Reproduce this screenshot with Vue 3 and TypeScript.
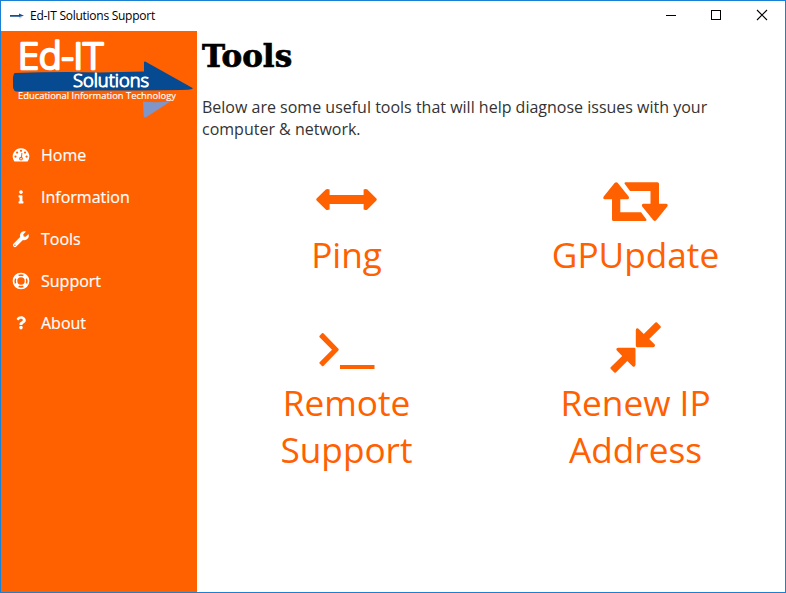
<script setup lang="ts">
interface MenuItem {
  label: string
  icon: 'home' | 'info' | 'wrench' | 'ring' | 'question'
}

interface Tool {
  lines: string[]
  viewBox: string
  path: string
}

const menu: MenuItem[] = [
  { label: 'Home', icon: 'home' },
  { label: 'Information', icon: 'info' },
  { label: 'Tools', icon: 'wrench' },
  { label: 'Support', icon: 'ring' },
  { label: 'About', icon: 'question' },
]

const tools: Tool[] = [
  {
    lines: ['Ping'],
    viewBox: '314 172 65 56',
    path: 'M316.6 198.6L325.8 189.5Q327.2 188.4 329.6 189.4V195H363.6V189.4Q366 188.4 367.4 189.5L376.4 198.6Q377.2 199.5 376.4 200.4L367.4 209.5Q366 210.6 363.6 209.6V204H329.6V209.6Q327.2 210.6 325.8 209.5L316.6 200.4Q315.8 199.5 316.6 198.6Z',
  },
  {
    lines: ['GPUpdate'],
    viewBox: '603 172 65 56',
    path: 'M614.8 182.8Q616.2 181.5 617.6 182.8L628.6 196.6Q629.8 198.8 627.6 199.3H620.3V212.2H641L646.3 219.3Q646.9 220.9 645.4 221H613.6Q612 221 612 219.4V199.3H604.8Q602.5 198.8 603.7 196.6ZM625.6 182.2H657.4Q659 182.2 659 183.8V203.8H666.2Q668.5 204.4 667.3 206.4L656.2 220.3Q654.8 221.6 653.4 220.3L642.2 206.4Q641.1 204.4 643.3 203.8H650.5V190.9H630L624.8 184Q624 182.5 625.6 182.2Z',
  },
  {
    lines: ['Remote', 'Support'],
    viewBox: '314 320 65 56',
    path: 'M319.6 335.8L322 333.2Q322.7 332.7 323.4 333.3L338.4 348.8Q339.2 349.7 338.4 350.6L323.4 366Q322.7 366.6 322 366L319.6 363.6Q319 362.9 319.6 362.2L332 349.7L319.6 337.2Q319 336.5 319.6 335.8ZM340 365H374.5V369H340Z',
  },
  {
    lines: ['Renew IP', 'Address'],
    viewBox: '603 320 65 56',
    path: 'M635.8 330.1Q636 327.5 638.2 328.6L643.8 334L655.4 322.6Q656.2 321.9 657 322.6L660.6 326.2Q661.3 327 660.6 327.8L649.2 339L654.8 344.6Q655.6 347 653.2 347.2H637.2Q635.8 347.2 635.8 345.8ZM618.2 347.8H634.2Q635.5 347.8 635.5 349.2V364.8Q635.2 367.4 632.8 366.4L627.3 361L615.9 372.4Q615.1 373.2 614.3 372.4L610.7 368.8Q609.9 368 610.7 367.2L622.2 356L616.6 350.3Q615.8 348.1 618.2 347.8Z',
  },
]
</script>

<template>
  <div class="window">
    <header class="titlebar">
      <svg class="app-icon" width="16" height="8" viewBox="0 0 16 8">
        <path d="M1 3H10V1.6L15 3.8L10 5V4.8H1Z" fill="#174f8c" />
        <path d="M10 5.4H13L10.8 6.4Z" fill="#9daac8" />
      </svg>
      <span class="title">Ed-IT Solutions Support</span>
      <div class="controls">
        <svg width="46" height="29" viewBox="0 0 46 29" shape-rendering="crispEdges">
          <path d="M18 14.5H28" stroke="#000" />
        </svg>
        <svg width="46" height="29" viewBox="0 0 46 29" shape-rendering="crispEdges">
          <rect x="17.5" y="9.5" width="9" height="9" fill="none" stroke="#000" />
        </svg>
        <svg width="46" height="29" viewBox="0 0 46 29">
          <path d="M17 9L27 19M27 9L17 19" stroke="#000" stroke-width="1.1" />
        </svg>
      </div>
    </header>

    <div class="body">
      <aside class="sidebar">
        <svg class="logo" width="196" height="94" viewBox="1 31 196 94">
          <path d="M14.5 73Q60 71.5 100 72.5L144 71.5L144 62Q145 61 147 62.6L193 88.3Q192 89.6 188 89.8Q160 90.6 100 90.6L16 91.5Q12.5 91 13 83Q12.6 75 14.5 73Z" fill="#064b91" />
          <path d="M143 101.6Q158 103 171 101L158 109.5L145.5 117.6Q143.6 117.6 143.6 115Z" fill="#8096c9" />
          <g>
            <text class="logo-main" x="18" y="69.3" textLength="85" lengthAdjust="spacingAndGlyphs">Ed-IT</text>
            <text class="logo-sub" x="73" y="87.2" textLength="76" lengthAdjust="spacingAndGlyphs">Solutions</text>
            <text class="logo-tag" x="18" y="98.5" textLength="158" lengthAdjust="spacingAndGlyphs">Educational Information Technology</text>
          </g>
        </svg>
        <nav class="menu">
          <a v-for="item in menu" :key="item.label" class="menu-item">
            <svg v-if="item.icon === 'home'" class="menu-icon" viewBox="0 0 18 18">
              <path fill-rule="evenodd" d="M9 2.2A8.3 8.3 0 0 0 2.1 15Q2.4 15.6 3 15.6H15Q15.6 15.6 15.9 15A8.3 8.3 0 0 0 9 2.2Z" fill="#fff" />
              <g fill="#ff6000">
                <circle cx="3.5" cy="10.6" r="1.1" /><circle cx="5.1" cy="6.6" r="1.1" />
                <circle cx="9" cy="4.8" r="1.1" /><circle cx="13" cy="6.6" r="1.1" /><circle cx="14.6" cy="10.6" r="1.1" />
                <circle cx="9" cy="12.6" r="1.9" />
                <path d="M9.5 6.7L10.4 7L9.9 12.5L8.7 12.2Z" />
              </g>
              <circle cx="9" cy="12.7" r=".8" fill="#fff" />
            </svg>
            <svg v-else-if="item.icon === 'info'" class="menu-icon" viewBox="-252 -84 696 696">
              <path fill="#fff" d="M20 424.229h20V279.771H20c-11.046 0-20-8.954-20-20V212c0-11.046 8.954-20 20-20h112c11.046 0 20 8.954 20 20v212.229h20c11.046 0 20 8.954 20 20V492c0 11.046-8.954 20-20 20H20c-11.046 0-20-8.954-20-20v-47.771c0-11.046 8.954-20 20-20zM96 0C56.235 0 24 32.235 24 72s32.235 72 72 72 72-32.235 72-72S135.764 0 96 0z" />
            </svg>
            <svg v-else-if="item.icon === 'wrench'" class="menu-icon" viewBox="-30 -40 580 580">
              <path fill="#fff" d="M507.73 109.1c-2.24-9.03-13.54-12.09-20.12-5.51l-74.36 74.36-67.88-11.31-11.31-67.88 74.36-74.36c6.62-6.62 3.43-17.9-5.66-20.16-47.38-11.74-99.55.91-136.58 37.93-39.64 39.64-50.55 97.1-34.05 147.2L18.74 402.76c-24.99 24.99-24.99 65.51 0 90.5 24.99 24.99 65.51 24.99 90.5 0l213.21-213.21c50.12 16.71 107.47 5.68 147.37-34.22 37.07-37.07 49.7-89.32 37.91-136.73zM64 472c-13.25 0-24-10.75-24-24 0-13.26 10.75-24 24-24s24 10.74 24 24c0 13.25-10.75 24-24 24z" />
            </svg>
            <svg v-else-if="item.icon === 'ring'" class="menu-icon" viewBox="0 0 18 18">
              <g fill="none" stroke="#fff">
                <circle cx="9" cy="9" r="7.5" stroke-width="1.7" />
                <circle cx="9" cy="9" r="4.4" stroke-width="1.4" />
                <path d="M3.8 3.8L6 6M14.2 3.8L12 6M3.8 14.2L6 12M14.2 14.2L12 12" stroke-width="4.4" />
              </g>
            </svg>
            <svg v-else class="menu-icon" viewBox="-156 -84 696 696">
              <path fill="#fff" d="M202.021 0C122.202 0 70.503 32.703 29.914 91.026c-7.363 10.58-5.093 25.086 5.178 32.874l43.138 32.709c10.373 7.865 25.132 6.026 33.253-4.148 25.049-31.381 43.63-49.449 82.757-49.449 30.764 0 68.816 19.799 68.816 49.631 0 22.552-18.617 34.134-48.993 51.164-35.423 19.86-82.299 44.576-82.299 106.405V320c0 13.255 10.745 24 24 24h72.471c13.255 0 24-10.745 24-24v-5.773c0-42.86 125.268-44.645 125.268-160.627C377.504 66.256 286.902 0 202.021 0zM192 373.459c-38.196 0-69.271 31.075-69.271 69.271 0 38.195 31.075 69.27 69.271 69.27s69.271-31.075 69.271-69.271-31.075-69.27-69.271-69.27z" />
            </svg>
            <span class="menu-label">{{ item.label }}</span>
          </a>
        </nav>
      </aside>

      <main class="content">
        <h1 class="heading">Tools</h1>
        <p class="intro">Below are some useful tools that will help diagnose issues with your computer &amp; network.</p>
        <div class="tools">
          <a v-for="tool in tools" :key="tool.lines[0]" class="tool">
            <svg width="65" height="56" :viewBox="tool.viewBox"><path :d="tool.path" fill="#ff6000" /></svg>
            <span v-for="line in tool.lines" :key="line" class="tool-line">{{ line }}</span>
          </a>
        </div>
      </main>
    </div>
  </div>
</template>

<style>
body {
  margin: 0;
  background: #fff;
}
</style>

<style scoped>
.window {
  box-sizing: border-box;
  width: 786px;
  height: 593px;
  border: 1px solid #1a80d4;
  background: #fff;
  font-family: "Open Sans", "Noto Sans", sans-serif;
  display: flex;
  flex-direction: column;
  overflow: hidden;
}
.titlebar {
  height: 30px;
  flex: none;
  display: flex;
  align-items: center;
}
.app-icon {
  margin-left: 8px;
}
.title {
  margin-left: 5px;
  font-size: 12px;
  line-height: 30px;
  color: #000;
  white-space: nowrap;
  letter-spacing: -0.26px;
}
.controls {
  margin-left: auto;
  margin-right: -1px;
  display: flex;
  height: 29px;
  align-self: flex-start;
}
.body {
  flex: 1;
  display: flex;
  min-height: 0;
}
.sidebar {
  width: 196px;
  flex: none;
  background: #ff6000;
}
.logo {
  display: block;
  overflow: visible;
}
.logo text {
  fill: #fff;
  stroke: #fff;
  stroke-linejoin: round;
  stroke-linecap: round;
}
.logo-main {
  font: 300 37px "Open Sans", sans-serif;
  stroke-width: 2.6px;
}
.logo-sub {
  font: 300 17.5px "Open Sans", sans-serif;
  stroke-width: 1px;
}
.logo-tag {
  font: 400 9px "Open Sans", sans-serif;
  stroke-width: 0.15px;
}
.menu {
  padding-top: 9px;
  display: flex;
  flex-direction: column;
}
.menu-item {
  height: 42px;
  padding-left: 11px;
  display: flex;
  align-items: center;
  color: #fff;
}
.menu-icon {
  width: 18px;
  height: 18px;
}
.menu-label {
  margin-left: 11px;
  font-size: 16px;
  line-height: 22px;
  -webkit-text-stroke: 0.2px #fff;
}
.content {
  flex: 1;
  padding: 0 5px;
  min-width: 0;
}
.heading {
  margin: 4px 0 0;
  font: 700 31px/42px "DejaVu Serif", serif;
  -webkit-text-stroke: 0.7px #000;
  color: #000;
}
.intro {
  margin: 19px 0 0;
  font-size: 16px;
  line-height: 22px;
  color: #333;
}
.tools {
  margin-top: 32px;
  display: grid;
  grid-template-columns: 1fr 1fr;
  row-gap: 42px;
}
.tool {
  display: flex;
  flex-direction: column;
  align-items: center;
  color: #ff6000;
}
.tool svg {
  margin-bottom: 3px;
}
.tool-line {
  font-size: 35.2px;
  line-height: 47px;
}
</style>
